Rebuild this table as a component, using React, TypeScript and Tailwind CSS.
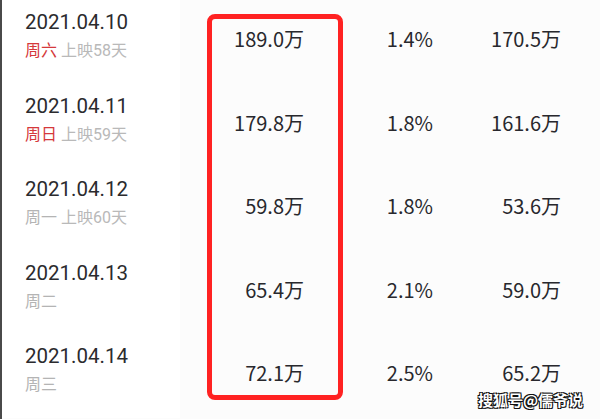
import React from "react";

type Row = {
  date: string;
  week: string;
  weekRed: boolean;
  extra: string;
  a: string;
  b: string;
  c: string;
};

const rows: Row[] = [
  { date: "2021.04.10", week: "周六", weekRed: true, extra: "上映58天", a: "189.0万", b: "1.4%", c: "170.5万" },
  { date: "2021.04.11", week: "周日", weekRed: true, extra: "上映59天", a: "179.8万", b: "1.8%", c: "161.6万" },
  { date: "2021.04.12", week: "周一", weekRed: false, extra: "上映60天", a: "59.8万", b: "1.8%", c: "53.6万" },
  { date: "2021.04.13", week: "周二", weekRed: false, extra: "", a: "65.4万", b: "2.1%", c: "59.0万" },
  { date: "2021.04.14", week: "周三", weekRed: false, extra: "", a: "72.1万", b: "2.5%", c: "65.2万" },
];

export default function App() {
  return (
    <div className="relative w-[600px] h-[419px] overflow-hidden bg-[#fcfcfc] border-l-2 border-[#4a4a4a]">
      <div className="flex flex-col">
        {rows.map((r) => (
          <div key={r.date} className="flex h-[83.5px]">
            <div className="w-[178px] bg-white pl-[23px] pt-[10px] flex flex-col">
              <div className="text-[20.5px] leading-[24px] text-[#2b2b2e] [font-family:Roboto,sans-serif]">
                {r.date}
              </div>
              <div className="mt-[7px] text-[16px] leading-[20px] flex gap-[4px] [font-family:Roboto,'Noto_Sans_CJK_SC',sans-serif]">
                <span className={r.weekRed ? "text-[#d5393b]" : "text-[#b4b4b4]"}>{r.week}</span>
                {r.extra && <span className="text-[#b9b9b9]">{r.extra}</span>}
              </div>
            </div>
            <div className="flex items-start pt-[27px] text-[20px] leading-[24px] text-[#28282d] [font-family:'Noto_Sans_CJK_SC',sans-serif]">
              <div className="w-[124px] text-right">{r.a}</div>
              <div className="w-[129px] text-right">{r.b}</div>
              <div className="w-[128px] text-right">{r.c}</div>
            </div>
          </div>
        ))}
      </div>
      <div className="absolute left-[205px] top-[14px] w-[136px] h-[386px] border-[5px] border-[#ff2222] rounded-[8px]" />
      <div className="absolute left-[476px] top-[390px] text-[15px] leading-[20px] font-bold text-white [font-family:'Noto_Sans_CJK_SC',sans-serif] [text-shadow:1px_1px_0_#111,-1px_-1px_0_#111,1px_-1px_0_#111,-1px_1px_0_#111]">
        搜狐号@儒爷说
      </div>
    </div>
  );
}
